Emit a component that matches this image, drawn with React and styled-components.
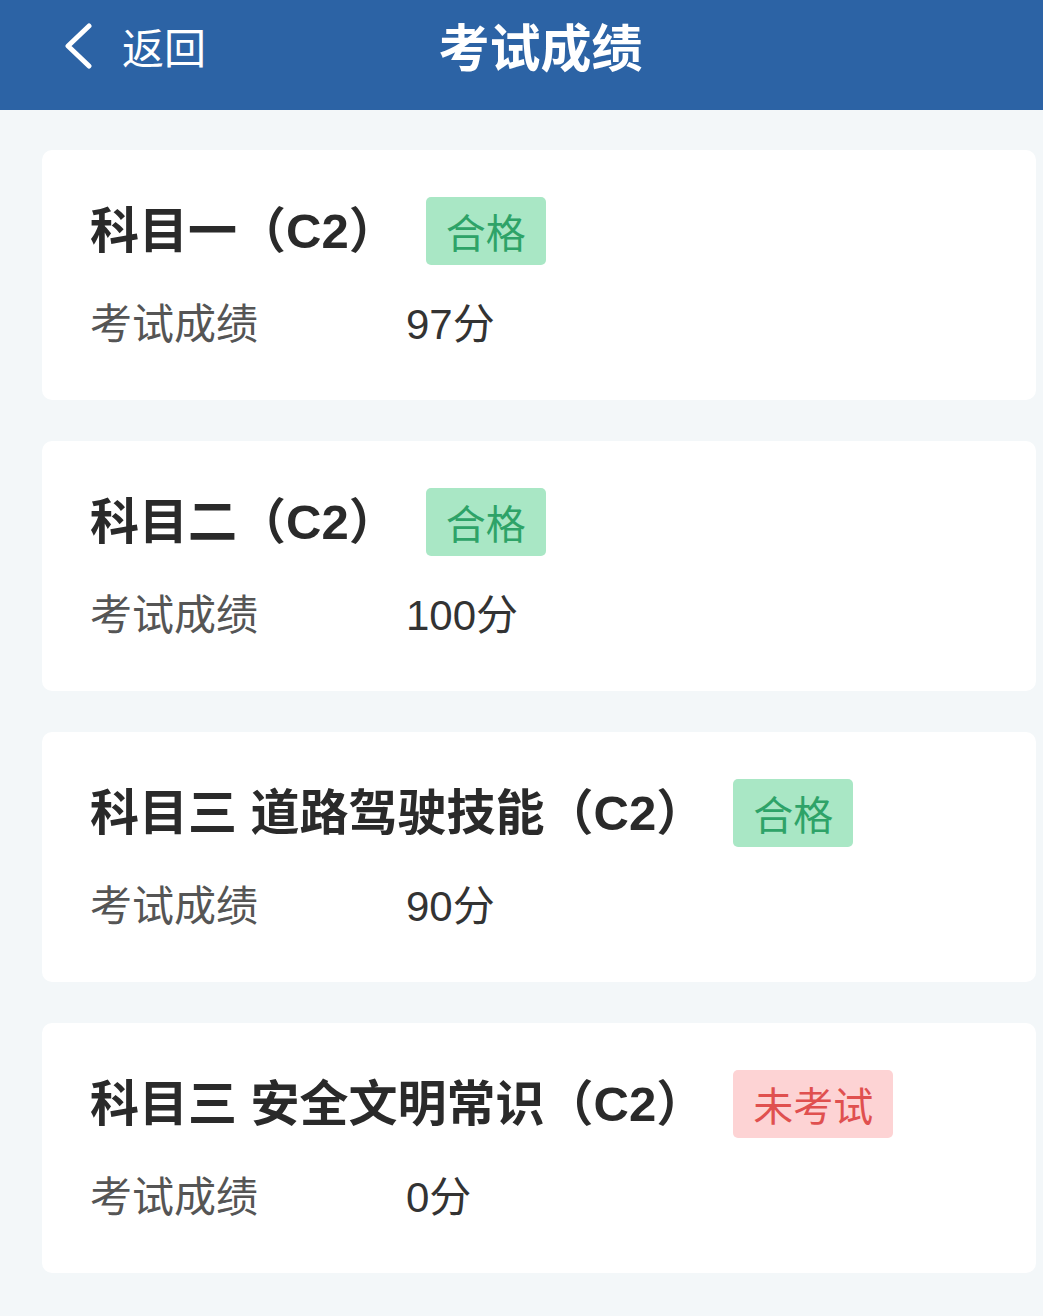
import React from "react";
import styled, { createGlobalStyle } from "styled-components";

const Global = createGlobalStyle`
  html, body { margin: 0; padding: 0; background: #f3f7f9; }
  body { font-family: "Liberation Sans", "Noto Sans CJK SC", sans-serif; }
`;

const Page = styled.div`
  width: 1043px;
  min-height: 1316px;
  background: #f3f7f9;
`;

const Header = styled.header`
  height: 110px;
  background: #2c63a5;
  display: grid;
  grid-template-columns: 1fr auto 1fr;
  align-items: center;
  color: #fff;
`;

const Back = styled.div`
  display: flex;
  align-items: center;
  padding-left: 62px;
  gap: 28px;
  font-size: 42px;
  line-height: 1;
  margin-top: -18px;
  font-family: "Noto Sans CJK SC", sans-serif;
`;

const Title = styled.h1`
  margin: -20px 0 0 38px;
  font-size: 51px;
  font-weight: 700;
  line-height: 1;
  font-family: "Noto Sans CJK SC", sans-serif;
`;

const List = styled.main`
  display: flex;
  flex-direction: column;
  gap: 41px;
  padding: 40px 7px 44px 42px;
`;

const Card = styled.section`
  height: 250px;
  box-sizing: border-box;
  background: #fff;
  border-radius: 10px;
  padding: 47px 48px 0;
`;

const TitleRow = styled.div`
  display: flex;
  align-items: center;
  height: 68px;
  gap: 28px;
`;

const Subject = styled.h2`
  margin: 0;
  font-size: 49px;
  font-weight: 700;
  color: #2a2a2a;
  line-height: 1;
  white-space: nowrap;
`;

const Badge = styled.span`
  display: inline-flex;
  align-items: center;
  justify-content: center;
  height: 68px;
  padding: 0 20px;
  border-radius: 5px;
  font-size: 40px;
  line-height: 1;
  font-family: "Noto Sans CJK SC", sans-serif;
  background: ${(p) => (p.$pass ? "#a9e7c5" : "#fdd3d4")};
  color: ${(p) => (p.$pass ? "#2ea368" : "#e0504f")};
`;

const ScoreRow = styled.div`
  display: flex;
  align-items: center;
  margin-top: 35px;
  height: 50px;
  font-size: 42px;
  line-height: 1;
`;

const Label = styled.span`
  width: 316px;
  color: #555;
`;

const Value = styled.span`
  color: #333;
`;

const data = [
  { name: "科目一（C2）", pass: true, score: "97分" },
  { name: "科目二（C2）", pass: true, score: "100分" },
  { name: "科目三 道路驾驶技能（C2）", pass: true, score: "90分" },
  { name: "科目三 安全文明常识（C2）", pass: false, score: "0分" },
];

export default function App() {
  return (
    <Page>
      <Global />
      <Header>
        <Back>
          <svg width="32" height="46" viewBox="0 0 32 46" fill="none">
            <path d="M27 3 L6 23 L27 43" stroke="#fff" strokeWidth="5" strokeLinecap="round" strokeLinejoin="round" />
          </svg>
          <span>返回</span>
        </Back>
        <Title>考试成绩</Title>
        <div />
      </Header>
      <List>
        {data.map((d) => (
          <Card key={d.name}>
            <TitleRow>
              <Subject>{d.name}</Subject>
              <Badge $pass={d.pass}>{d.pass ? "合格" : "未考试"}</Badge>
            </TitleRow>
            <ScoreRow>
              <Label>考试成绩</Label>
              <Value>{d.score}</Value>
            </ScoreRow>
          </Card>
        ))}
      </List>
    </Page>
  );
}
